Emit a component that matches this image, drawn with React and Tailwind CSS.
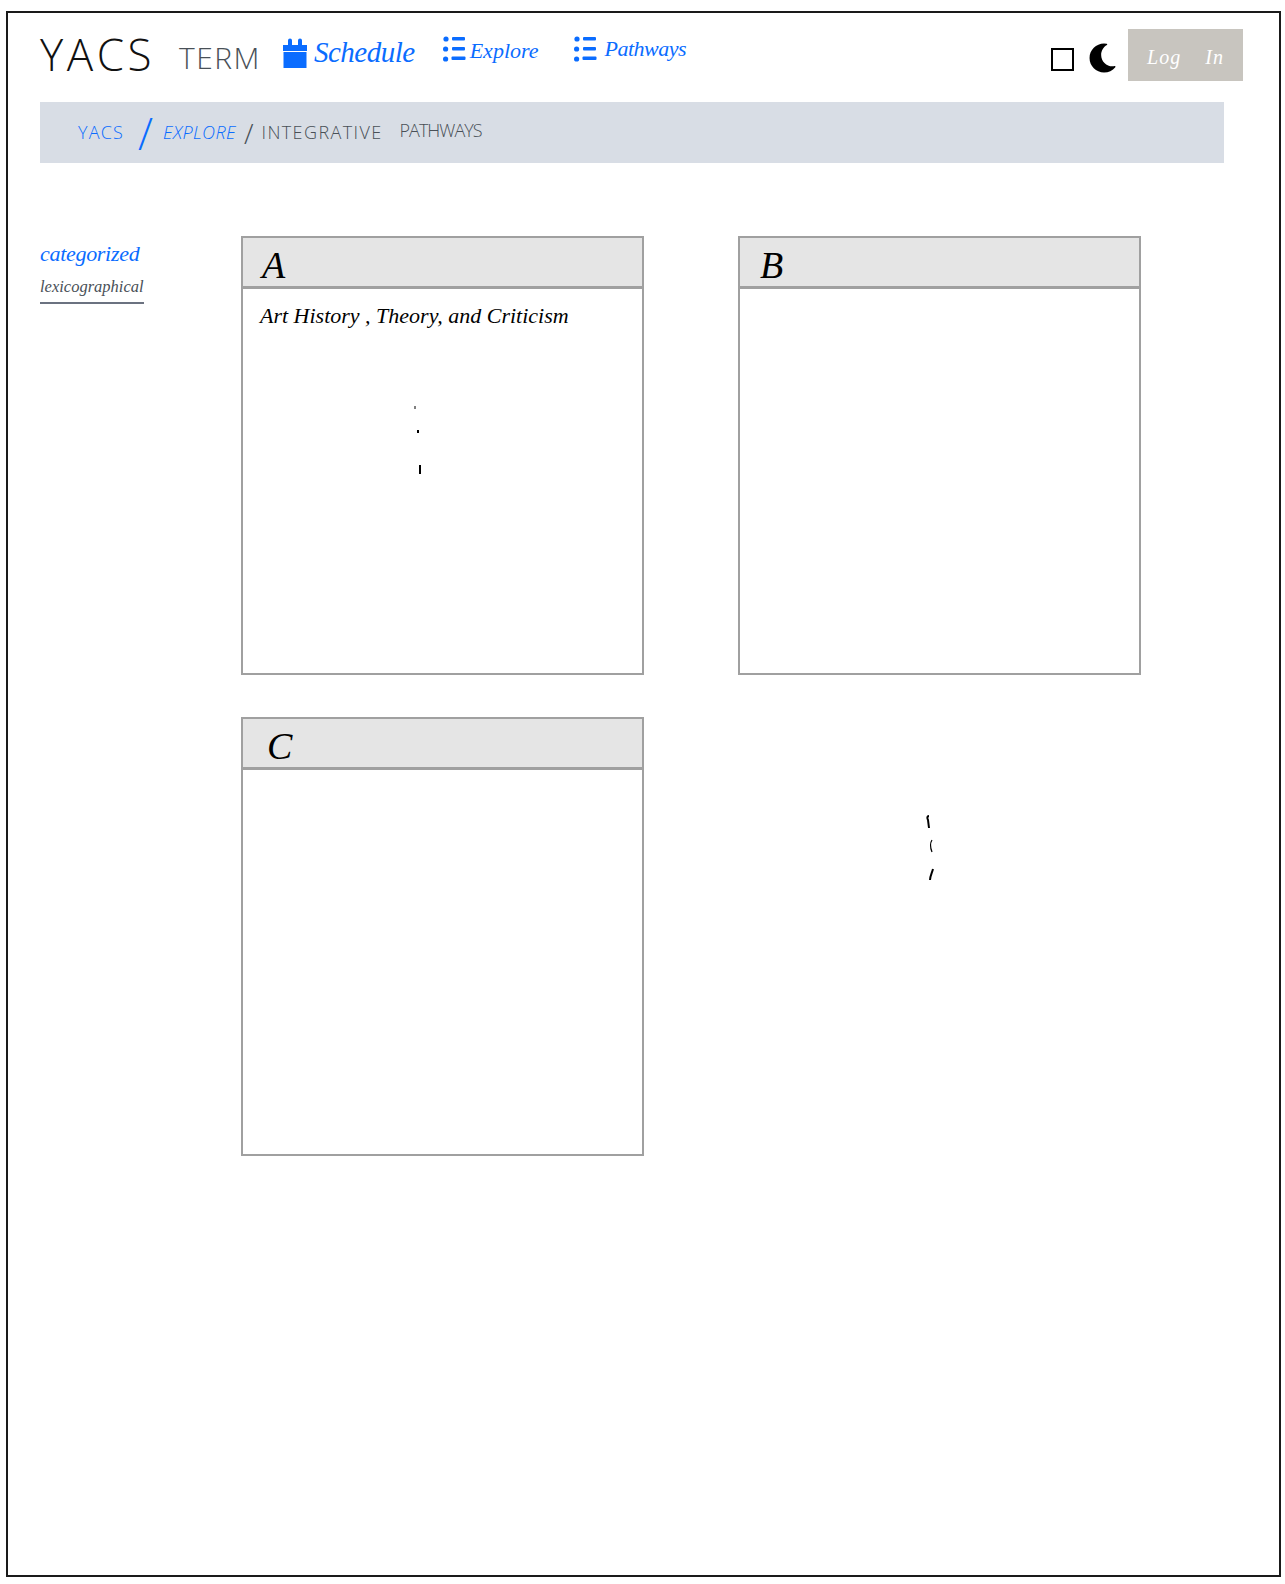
import { FaMoon } from 'react-icons/fa'

const hand = { fontFamily: '"Liberation Serif", serif' }
const caps = { fontFamily: '"Open Sans", sans-serif' }

function CalendarIcon() {
  return (
    <svg width="24" height="30" viewBox="0 0 24 30" className="text-[#0a6cff] shrink-0" fill="currentColor">
      <path d="M0 7h5V2.5a2 2 0 0 1 4 0V7h6V2.5a2 2 0 0 1 4 0V7h5v6H0z" />
      <rect x="0.5" y="14" width="23" height="16" />
    </svg>
  )
}

function ListIcon() {
  return (
    <svg width="23" height="26" viewBox="0 0 23 26" className="text-[#0a6cff] shrink-0" fill="currentColor">
      <circle cx="3" cy="3" r="2.6" />
      <circle cx="2.6" cy="13" r="2.6" />
      <circle cx="2.6" cy="23" r="2.6" />
      <rect x="9" y="1" width="13" height="3.6" rx="1" />
      <rect x="9" y="11" width="13" height="3.6" rx="1" />
      <rect x="8.5" y="20.5" width="14" height="3.6" rx="1" />
    </svg>
  )
}

function Card({ letter, letterClass, children }) {
  return (
    <div className="h-[439px] border-2 border-[#a0a0a0] flex flex-col">
      <div className="h-[51px] shrink-0 bg-[#e5e5e5] border-b-[3px] border-[#a0a0a0] flex items-center pt-[5px]">
        <span className={`text-[38px] leading-none italic text-black ${letterClass}`} style={hand}>{letter}</span>
      </div>
      <div className="flex-1">{children}</div>
    </div>
  )
}

export default function App() {
  return (
    <div className="pt-[11px] pl-[6px] bg-white">
      <div className="w-[1275px] h-[1566px] border-2 border-[#1a1a1a] bg-white relative">
        <header className="h-[89px] flex items-start pl-[32px] pr-[36px] pt-[16px]">
          <span className="text-[44px] leading-[48px] tracking-[3.5px] text-[#111] font-light mt-[1px]" style={caps}>YACS</span>
          <span className="text-[30px] leading-[40px] tracking-[1.5px] text-[#495057] font-light ml-[24px] mt-[9px]" style={caps}>TERM</span>
          <div className="ml-[22px] mt-[9px] flex items-start">
            <CalendarIcon />
            <span className="text-[29px] leading-[36px] tracking-[-0.5px] italic text-[#0a6cff] ml-[7px] -mt-[4px]" style={hand}>Schedule</span>
          </div>
          <div className="ml-[28px] mt-[7px] flex items-start">
            <ListIcon />
            <span className="text-[22px] leading-[30px] italic text-[#0a6cff] ml-[4px]" style={hand}>Explore</span>
          </div>
          <div className="ml-[35px] mt-[7px] flex items-start">
            <ListIcon />
            <span className="text-[22px] leading-[30px] tracking-[-0.5px] italic text-[#0a6cff] ml-[8px] -mt-[2px]" style={hand}>Pathways</span>
          </div>
          <div className="ml-auto flex items-start">
            <div className="w-[23px] h-[23px] border-2 border-black mt-[19px]" />
            <FaMoon className="w-[29px] h-[32px] ml-[14px] mt-[13px] text-black" />
            <button className="w-[115px] h-[52px] ml-[11px] pt-[4px] bg-[#c8c5bf] text-white text-[20px] italic tracking-[1px]" style={hand}>Log&nbsp;&nbsp;&nbsp;&nbsp;In</button>
          </div>
        </header>

        <nav className="ml-[32px] w-[1184px] h-[61px] bg-[#d8dde5] flex items-center pl-[38px] text-[18px]" style={caps}>
          <span className="text-[#0a6cff] font-light tracking-[1.2px]">YACS</span>
          <span className="text-[#0a6cff] text-[44px] leading-none font-light ml-[14px] mr-[10px]">/</span>
          <span className="text-[#0a6cff] font-light italic tracking-[0.4px]">EXPLORE</span>
          <span className="text-[#495057] text-[28px] leading-none font-light ml-[8px] mr-[8px]">/</span>
          <span className="text-[#495057] font-light tracking-[1.4px]">INTEGRATIVE</span>
          <span className="text-[#495057] font-light tracking-[-1px] ml-[17px] -mt-[4px]">PATHWAYS</span>
        </nav>

        <div className="flex mt-[73px] pl-[32px]">
          <aside className="w-[201px] shrink-0 pt-[2px]">
            <div className="text-[22px] leading-[32px] tracking-[-0.3px] italic text-[#0a6cff]" style={hand}>categorized</div>
            <div className="w-[104px] mt-[2px] text-[16.5px] leading-[30px] italic text-[#495057] border-b-2 border-[#6b7280] whitespace-nowrap" style={hand}>lexicographical</div>
          </aside>

          <div className="grid grid-cols-[403px_403px] gap-x-[94px] gap-y-[42px]">
            <Card letter="A" letterClass="ml-[19px]">
              <div className="pl-[17px] pt-[9px] text-[22px] leading-[36px] italic text-black whitespace-nowrap" style={hand}>Art History , Theory, and Criticism</div>
              <svg width="12" height="76" viewBox="0 0 12 76" className="ml-[170px] mt-[71px]" stroke="black" fill="none">
                <path d="M2 1v3" strokeWidth="1" />
                <path d="M5 25v3" strokeWidth="2" />
                <path d="M7 60v9" strokeWidth="2" />
              </svg>
            </Card>
            <Card letter="B" letterClass="ml-[20px]" />
            <Card letter="C" letterClass="ml-[24px]" />
            <div className="pl-[187px] pt-[97px]">
              <svg width="14" height="68" viewBox="0 0 14 68" stroke="black" fill="none">
                <path d="M4 2C2 2 2 4 3 6l1 8" strokeWidth="2" />
                <path d="M7 26c-2 3-2 7 0 12" strokeWidth="1.2" />
                <path d="M8 55c-1 4-3 7-3 11" strokeWidth="2" />
              </svg>
            </div>
          </div>
        </div>
      </div>
    </div>
  )
}
